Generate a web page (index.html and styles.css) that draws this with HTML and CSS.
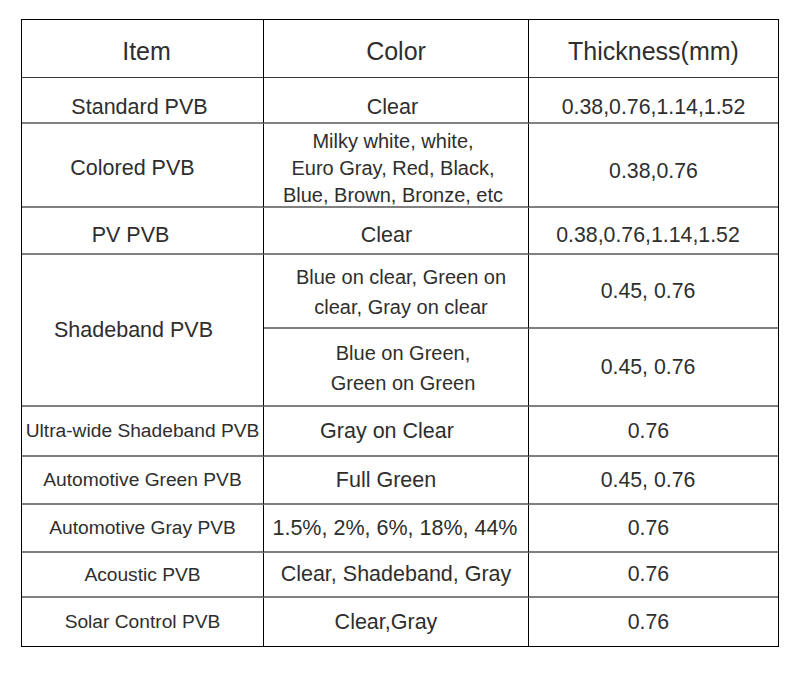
FILE: index.html
```html
<!DOCTYPE html>
<html lang="en">
<head>
<meta charset="utf-8">
<title>PVB Specifications</title>
<link rel="stylesheet" href="styles.css">
</head>
<body>
<div class="page">
  <div class="spec">
    <div class="cell head c1 r4">Item</div>
    <div class="cell head c2">Color</div>
    <div class="cell head c3">Thickness(mm)</div>

    <div class="cell c1 big low l6">Standard PVB</div>
    <div class="cell c2 big low l7">Clear</div>
    <div class="cell c3 num low">0.38,0.76,1.14,1.52</div>

    <div class="cell c1 big mid l20">Colored PVB</div>
    <div class="cell c2 multi tight l6">Milky white, white,<br>Euro Gray, Red, Black,<br>Blue, Brown, Bronze, etc</div>
    <div class="cell c3 num lower">0.38,0.76</div>

    <div class="cell c1 big drop l24">PV PVB</div>
    <div class="cell c2 big drop l19">Clear</div>
    <div class="cell c3 num drop l11">0.38,0.76,1.14,1.52</div>

    <div class="cell c1 big span2 l18">Shadeband PVB</div>
    <div class="cell c2 multi r10">Blue on clear, Green on<br>clear, Gray on clear</div>
    <div class="cell c3 num l11">0.45, 0.76</div>
    <div class="cell c2 multi r14">Blue on Green,<br>Green on Green</div>
    <div class="cell c3 num l11">0.45, 0.76</div>

    <div class="cell c1 small">Ultra-wide Shadeband PVB</div>
    <div class="cell c2 big l18">Gray on Clear</div>
    <div class="cell c3 num l10">0.76</div>

    <div class="cell c1 small">Automotive Green PVB</div>
    <div class="cell c2 big l20">Full Green</div>
    <div class="cell c3 num l11">0.45, 0.76</div>

    <div class="cell c1 small">Automotive Gray PVB</div>
    <div class="cell c2 big l2">1.5%, 2%, 6%, 18%, 44%</div>
    <div class="cell c3 num l10">0.76</div>

    <div class="cell c1 small">Acoustic PVB</div>
    <div class="cell c2 big">Clear, Shadeband, Gray</div>
    <div class="cell c3 num l10">0.76</div>

    <div class="cell c1 small last">Solar Control PVB</div>
    <div class="cell c2 big last l20">Clear,Gray</div>
    <div class="cell c3 num last l10">0.76</div>
  </div>
</div>
</body>
</html>
```

FILE: styles.css
```css
html, body {
  margin: 0;
  padding: 0;
  background: #ffffff;
}

.page {
  padding: 19px 0 0 21px;
}

.spec {
  display: grid;
  width: 758px;
  box-sizing: border-box;
  border: 1px solid #000;
  grid-template-columns: 242px 265px 249px;
  grid-template-rows: 58px 46px 84px 47px 74px 78px 50px 48px 48px 45px 48px;
  font-family: "Liberation Sans", Arial, sans-serif;
  color: #2e2e2e;
}

.cell {
  box-sizing: border-box;
  display: flex;
  align-items: center;
  justify-content: center;
  text-align: center;
  border-bottom: 2px solid #808080;
  white-space: nowrap;
}

.c1, .c2 {
  border-right: 1px solid #000;
}

.head {
  font-size: 25px;
  border-bottom: 1px solid #3a3a3a;
  padding-top: 6px;
}

.big {
  font-size: 21.5px;
}

.small {
  font-size: 19.2px;
}

.num {
  font-size: 21.3px;
}

.multi {
  font-size: 20px;
  line-height: 30px;
  padding-top: 2px;
}

.multi.tight {
  line-height: 27px;
  padding-top: 6px;
}

.low {
  padding-top: 14px;
}

.mid {
  padding-top: 6px;
}

.lower {
  padding-top: 12px;
}

.drop {
  padding-top: 10px;
}

.span2 {
  grid-row: span 2;
}

.last {
  border-bottom: none;
}

/* horizontal nudges: text sits off-centre in the source */
.l2 { padding-right: 2px; }
.l6 { padding-right: 6px; }
.l7 { padding-right: 7px; }
.l10 { padding-right: 10px; }
.l11 { padding-right: 11px; }
.l18 { padding-right: 18px; }
.l19 { padding-right: 19px; }
.l20 { padding-right: 20px; }
.l24 { padding-right: 24px; }
.r4 { padding-left: 8px; }
.r10 { padding-left: 10px; }
.r14 { padding-left: 14px; }
```
